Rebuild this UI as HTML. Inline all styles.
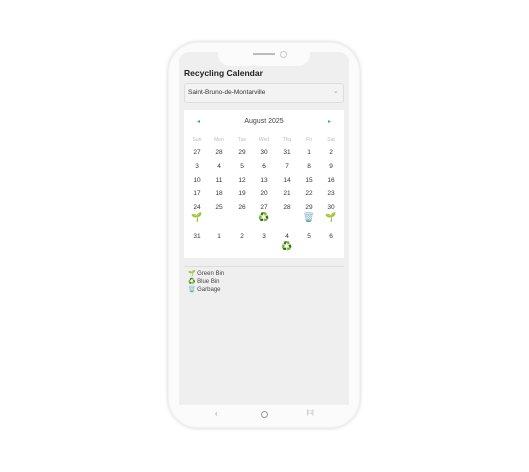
<!DOCTYPE html><html><head><style>
body{margin:0;width:529px;height:472px;background:#fff;font-family:"Liberation Sans",sans-serif;position:relative;overflow:hidden}
.a{position:absolute}
.phone{left:168px;top:42px;width:192px;height:386px;border-radius:30px;background:#fbfbfb;box-shadow:0 0 4px rgba(0,0,0,.18),inset 0 0 2px rgba(0,0,0,.1)}
.screen{left:179px;top:52px;width:170px;height:353px;background:#efefef;border-radius:10px 10px 0 0}
.notch{left:218px;top:50px;width:92px;height:16px;background:#fbfbfb;border-radius:0 0 12px 12px}
.c{position:absolute;width:20px;text-align:center;font-size:6.5px;color:#333}
.w{color:#bbb;font-size:5px}
.e{position:absolute;font-size:9px;width:20px;text-align:center}
</style></head><body>
<div class="a phone"></div>
<div class="a screen"></div>
<div class="a notch"></div>
<div class="a" style="left:253px;top:53px;width:22px;height:1.5px;background:#bbb"></div>
<div class="a" style="left:280px;top:51px;width:5px;height:5px;border:1px solid #ccc;border-radius:50%"></div>
<div class="a" style="left:184px;top:68px;font-size:8.5px;font-weight:bold;color:#222">Recycling Calendar</div>
<div class="a" style="left:184px;top:83px;width:160px;height:20px;background:#f3f3f3;border:1px solid #ddd;border-radius:3px;box-sizing:border-box"></div>
<div class="a" style="left:188px;top:89px;font-size:6.5px;color:#333">Saint-Bruno-de-Montarville</div>
<div class="a" style="left:333px;top:87px;font-size:7px;color:#999">⌄</div>
<div class="a" style="left:184px;top:110px;width:160px;height:148px;background:#fff"></div>
<div class="a" style="left:197px;top:118px;font-size:6px;color:#3aa6c4">◂</div>
<div class="a" style="left:328px;top:118px;font-size:6px;color:#3aa6c4">▸</div>
<div class="a" style="left:184px;top:118px;width:160px;text-align:center;font-size:7px;color:#444">August 2025</div>
<div id="g"></div>
<div class="a" style="left:184px;top:266px;width:160px;height:1px;background:#ddd"></div>
<div class="a" style="left:188px;top:270px;font-size:6px;color:#444;line-height:8px">🌱 Green Bin<br>♻️ Blue Bin<br>🗑️ Garbage</div>
<div class="a" style="left:215px;top:409px;font-size:8px;color:#999">‹</div>
<div class="a" style="left:261px;top:411px;width:5px;height:5px;border:1px solid #999;border-radius:50%"></div>
<div class="a" style="left:307px;top:410px;font-size:6px;color:#999">|□|</div>
<script>
var xs=[197,219,242,264,287,309,331],h='';
var wd=['Sun','Mon','Tue','Wed','Thu','Fri','Sat'];
wd.forEach((d,i)=>h+=`<div class="c w" style="left:${xs[i]-10}px;top:137px">${d}</div>`);
var rows=[[27,28,29,30,31,1,2],[3,4,5,6,7,8,9],[10,11,12,13,14,15,16],[17,18,19,20,21,22,23],[24,25,26,27,28,29,30],[31,1,2,3,4,5,6]];
var ys=[149,163,177,190,204,233];
rows.forEach((r,j)=>r.forEach((d,i)=>h+=`<div class="c" style="left:${xs[i]-10}px;top:${ys[j]}px">${d}</div>`));
[[0,212,'🌱'],[3,212,'♻️'],[5,212,'🗑️'],[6,212,'🌱'],[4,241,'♻️']].forEach(e=>h+=`<div class="e" style="left:${xs[e[0]]-10}px;top:${e[1]}px">${e[2]}</div>`);
document.getElementById('g').innerHTML=h;
</script>
</body></html>
